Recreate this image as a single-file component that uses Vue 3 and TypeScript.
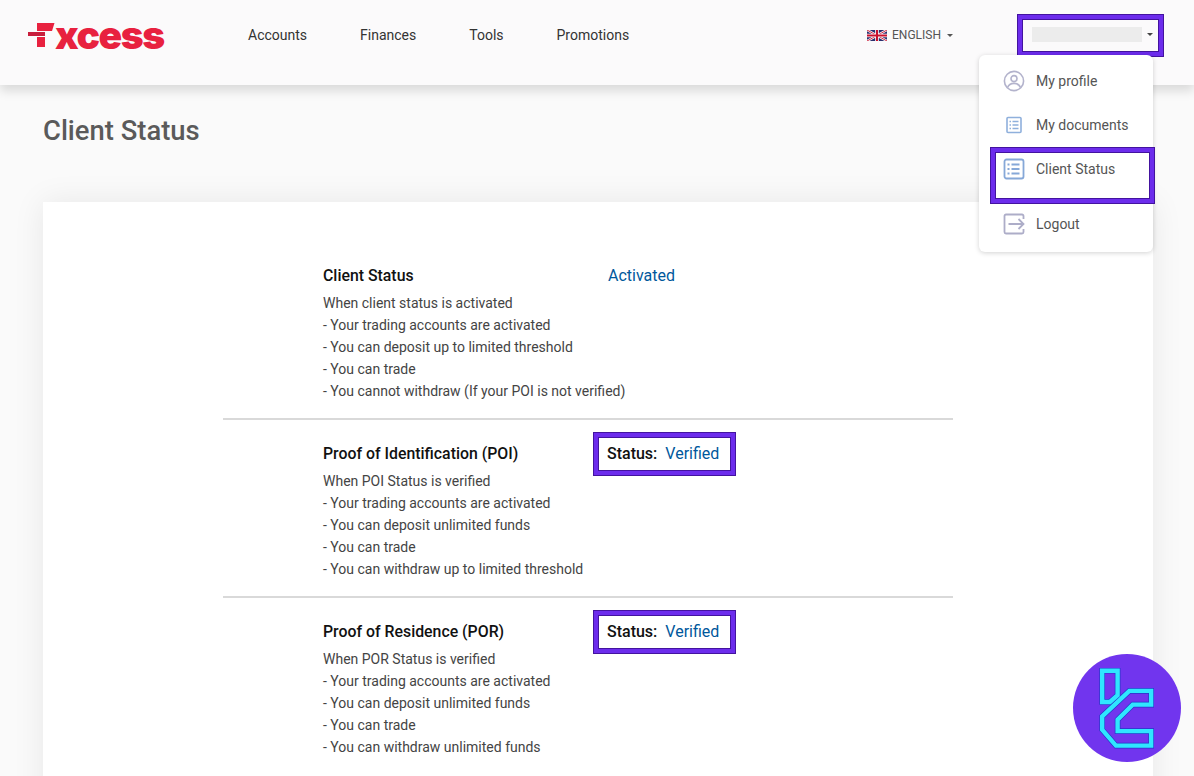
<script setup lang="ts">
interface Section {
  title: string
  status: string
  framed: boolean
  lines: string[]
}
const nav: string[] = ['Accounts', 'Finances', 'Tools', 'Promotions']
const sections: Section[] = [
  {
    title: 'Client Status',
    status: 'Activated',
    framed: false,
    lines: [
      'When client status is activated',
      '- Your trading accounts are activated',
      '- You can deposit up to limited threshold',
      '- You can trade',
      '- You cannot withdraw (If your POI is not verified)',
    ],
  },
  {
    title: 'Proof of Identification (POI)',
    status: 'Verified',
    framed: true,
    lines: [
      'When POI Status is verified',
      '- Your trading accounts are activated',
      '- You can deposit unlimited funds',
      '- You can trade',
      '- You can withdraw up to limited threshold',
    ],
  },
  {
    title: 'Proof of Residence (POR)',
    status: 'Verified',
    framed: true,
    lines: [
      'When POR Status is verified',
      '- Your trading accounts are activated',
      '- You can deposit unlimited funds',
      '- You can trade',
      '- You can withdraw unlimited funds',
    ],
  },
]
</script>

<template>
  <div class="page">
    <header class="header">
      <div class="logo">
        <svg class="logo-mark" width="27" height="24" viewBox="0 0 27 24">
          <path d="M9 0H26.500L24 8H9z" fill="#e8213f" />
          <path d="M0 9h17v4H0z" fill="#c81e3c" />
          <path d="M9 14H17V24H9z" fill="#e8213f" />
        </svg>
        <span class="logo-text">xcess</span>
      </div>
      <nav class="nav">
        <a v-for="item in nav" :key="item" class="nav-item">{{ item }}</a>
      </nav>
      <div class="lang">
        <svg width="20" height="11" viewBox="0 0 20 11">
          <rect width="20" height="11" fill="#2b2f6e" />
          <path d="M0 0l20 11M20 0L0 11" stroke="#fff" stroke-width="2.400" />
          <path d="M0 0l20 11M20 0L0 11" stroke="#c8102e" stroke-width="0.900" />
          <path d="M10 0v11M0 5.500h20" stroke="#fff" stroke-width="3.600" />
          <path d="M10 0v11M0 5.500h20" stroke="#c8102e" stroke-width="2" />
        </svg>
        <span>ENGLISH</span>
        <i class="caret"></i>
      </div>
      <div class="user">
        <span class="user-name"></span>
        <i class="caret dark"></i>
        <span class="frame"></span>
      </div>
      <div class="menu">
        <div class="menu-item">
          <svg class="menu-icon" width="22" height="22" viewBox="0 0 22 22" fill="none" stroke="#b3b3cc" stroke-width="1.600">
            <circle cx="11" cy="11" r="9.600" />
            <circle cx="11" cy="8.600" r="3" />
            <path d="M4.600 17.600c1-3 3.600-4.200 6.400-4.200s5.400 1.200 6.400 4.200" />
          </svg>
          <span>My profile</span>
        </div>
        <div class="menu-item">
          <svg class="menu-icon" width="22" height="22" viewBox="0 0 22 22" fill="none" stroke="#8fb0dc" stroke-width="1.600">
            <rect x="4" y="3.500" width="14" height="15" rx="1" />
            <path d="M9.500 7.500h6M9.500 11h6M9.500 14.500h6M6.500 7.500h1.500M6.500 11h1.500M6.500 14.500h1.500" />
          </svg>
          <span>My documents</span>
        </div>
        <div class="menu-item current">
          <svg class="menu-icon" width="22" height="22" viewBox="0 0 22 22" fill="none" stroke="#86a8d8" stroke-width="1.800">
            <rect x="1.500" y="1.500" width="19" height="19" rx="2" />
            <path d="M8.500 6.500h8M8.500 11h8M8.500 15.500h8M4.500 6.500h2M4.500 11h2M4.500 15.500h2" />
          </svg>
          <span>Client Status</span>
          <span class="frame"></span>
        </div>
        <div class="menu-item">
          <svg class="menu-icon" width="22" height="22" viewBox="0 0 22 22" fill="none" stroke="#adadc8" stroke-width="1.800">
            <path d="M20.500 6V3a1.500 1.500 0 0 0-1.500-1.500H3A1.500 1.500 0 0 0 1.500 3v16A1.500 1.500 0 0 0 3 20.500h16a1.500 1.500 0 0 0 1.500-1.500v-3" />
            <path d="M5.500 11h15M15.500 6l5 5-5 5" />
          </svg>
          <span>Logout</span>
        </div>
      </div>
    </header>

    <main class="main">
      <h1 class="title">Client Status</h1>
      <section class="card">
        <div class="rows">
          <article v-for="s in sections" :key="s.title" class="row">
            <div class="row-body">
              <h2 class="row-title">{{ s.title }}</h2>
              <p v-for="line in s.lines" :key="line" class="line">{{ line }}</p>
            </div>
            <div class="row-status">
              <span class="status">
                <b v-if="s.framed" class="status-label">Status:</b>
                <span class="status-value">{{ s.status }}</span>
                <span v-if="s.framed" class="frame"></span>
              </span>
            </div>
          </article>
        </div>
      </section>
    </main>

    <svg class="badge" width="108" height="108" viewBox="40 42 322 322">
      <circle cx="201" cy="203" r="161" fill="#7135ee" />
      <g fill="none" stroke-linejoin="miter">
        <g stroke="#2439c8" stroke-width="17">
          <path d="M127 92H173V165L150 185H127Z" />
          <path d="M127 228L208 152H273V193H218L173 238V272H273V315H168L127 268Z" />
        </g>
        <g stroke="#2fe6ff" stroke-width="13">
          <path d="M127 92H173V165L150 185H127Z" />
          <path d="M127 228L208 152H273V193H218L173 238V272H273V315H168L127 268Z" />
        </g>
      </g>
    </svg>
  </div>
</template>

<style>
html,
body {
  margin: 0;
  background: #fafafa;
}
</style>

<style scoped>
.page {
  position: relative;
  height: 776px;
  overflow: hidden;
  background: #fafafa;
  font-family: Roboto, "Liberation Sans", sans-serif;
  font-size: 14px;
  color: #444;
}
.header {
  position: relative;
  z-index: 2;
  height: 85px;
  display: flex;
  align-items: flex-start;
  padding-left: 28px;
  background: #fbfafb;
  box-shadow: 0 6px 10px rgba(0, 0, 0, 0.13);
}
.logo {
  width: 136px;
  height: 36px;
  margin-top: 17px;
  display: flex;
  align-items: center;
  color: #e8213f;
}
.logo-mark {
  flex: none;
}
.logo-text {
  font-family: Inter, sans-serif;
  font-size: 39px;
  font-weight: 900;
  line-height: 36px;
  letter-spacing: -1.500px;
}
.nav {
  margin-left: 84px;
  margin-top: 25px;
  display: flex;
  gap: 53px;
}
.nav-item {
  font-size: 14px;
  line-height: 20px;
  color: #333;
}
.lang {
  position: absolute;
  left: 867px;
  top: 28px;
  display: flex;
  align-items: center;
  gap: 5px;
  font-size: 12px;
  line-height: 14px;
  color: #555;
}
.caret {
  display: inline-block;
  margin-left: 1px;
  border-top: 3px solid #555;
  border-left: 3px solid transparent;
  border-right: 3px solid transparent;
}
.caret.dark {
  margin-left: 5px;
  border-top-color: #444;
}
.user {
  position: absolute;
  left: 1032px;
  top: 27px;
  display: flex;
  align-items: center;
}
.user-name {
  width: 110px;
  height: 15px;
  background: #ececec;
}
.frame {
  position: absolute;
  box-sizing: border-box;
  border: 4px solid #6c2cec;
  box-shadow: 0 0 0 1px #43139f, inset 0 0 0 1px #43139f;
  pointer-events: none;
}
.user .frame {
  left: -14px;
  top: -12px;
  width: 145px;
  height: 41px;
}
.menu {
  position: absolute;
  left: 979px;
  top: 55px;
  width: 174px;
  box-sizing: border-box;
  padding: 4px 0 6px;
  background: #fff;
  border-radius: 6px;
  box-shadow: 0 1px 5px rgba(0, 0, 0, 0.18);
}
.menu-item {
  position: relative;
  height: 44px;
  display: flex;
  align-items: center;
  gap: 11px;
  padding-left: 24px;
  font-size: 14px;
  color: #555;
}
.menu-icon {
  flex: none;
}
.menu-item.current {
  height: 55px;
  align-items: flex-start;
  padding-top: 11px;
  box-sizing: border-box;
}
.menu-item.current span:not(.frame) {
  line-height: 22px;
}
.current .frame {
  left: 12px;
  right: -1px;
  top: 1px;
  height: 55px;
}
.main {
  padding: 30px 41px 0 43px;
}
.title {
  margin: 0;
  font-size: 27.400px;
  font-weight: 500;
  line-height: 32px;
  color: #5a5a5a;
}
.card {
  margin-top: 55px;
  padding: 62px 200px 40px 180px;
  background: #fff;
  box-shadow: 0 0 30px rgba(0, 0, 0, 0.08);
}
.row {
  display: grid;
  grid-template-columns: 285px 1fr;
  padding: 0 0 16px 100px;
  margin-bottom: 22px;
  border-bottom: 2px solid #d9d9d9;
}
.row:last-child {
  border-bottom: none;
}
.row-body {
  white-space: nowrap;
  min-width: 0;
}
.row-title {
  margin: 0 0 5px;
  padding-top: 1px;
  font-size: 15.850px;
  font-weight: 500;
  line-height: 22px;
  color: #111;
}
.line {
  margin: 0;
  font-size: 14px;
  line-height: 22px;
  color: #444;
}
.status {
  position: relative;
  top: 1px;
  display: inline-flex;
  gap: 8px;
  font-size: 16px;
  line-height: 22px;
}
.status-label {
  margin-left: -1px;
  font-weight: 500;
  color: #111;
}
.status-value {
  color: #00589c;
}
.status .frame {
  left: -14px;
  right: -16px;
  top: -10px;
  bottom: -10px;
}
.badge {
  position: absolute;
  right: 13px;
  bottom: 14px;
  z-index: 3;
}
</style>
